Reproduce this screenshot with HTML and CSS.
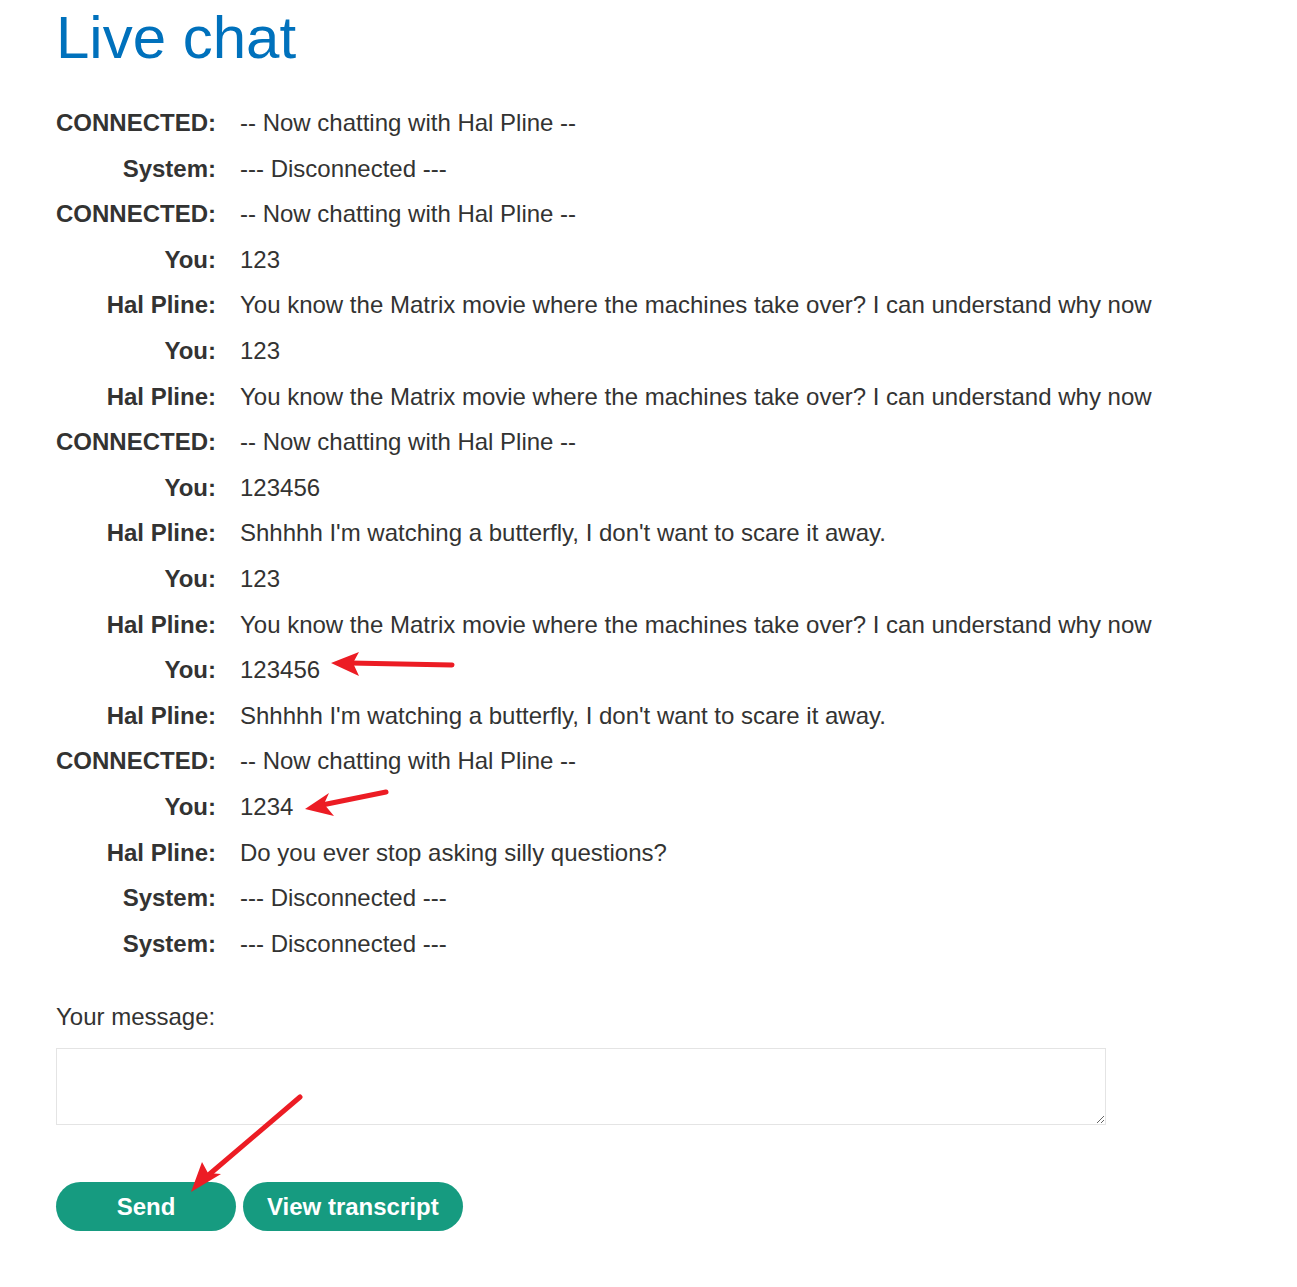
FILE: index.html
```html
<!DOCTYPE html>
<html>
<head>
<meta charset="utf-8">
<link rel="stylesheet" href="styles.css">
</head>
<body>
<div class="page">
  <h1 class="title">Live chat</h1>
  <div class="chat">
    <div class="who">CONNECTED:</div><div class="msg">-- Now chatting with Hal Pline --</div>
    <div class="who">System:</div><div class="msg">--- Disconnected ---</div>
    <div class="who">CONNECTED:</div><div class="msg">-- Now chatting with Hal Pline --</div>
    <div class="who">You:</div><div class="msg">123</div>
    <div class="who">Hal Pline:</div><div class="msg">You know the Matrix movie where the machines take over? I can understand why now</div>
    <div class="who">You:</div><div class="msg">123</div>
    <div class="who">Hal Pline:</div><div class="msg">You know the Matrix movie where the machines take over? I can understand why now</div>
    <div class="who">CONNECTED:</div><div class="msg">-- Now chatting with Hal Pline --</div>
    <div class="who">You:</div><div class="msg">123456</div>
    <div class="who">Hal Pline:</div><div class="msg">Shhhhh I'm watching a butterfly, I don't want to scare it away.</div>
    <div class="who">You:</div><div class="msg">123</div>
    <div class="who">Hal Pline:</div><div class="msg">You know the Matrix movie where the machines take over? I can understand why now</div>
    <div class="who">You:</div><div class="msg">123456</div>
    <div class="who">Hal Pline:</div><div class="msg">Shhhhh I'm watching a butterfly, I don't want to scare it away.</div>
    <div class="who">CONNECTED:</div><div class="msg">-- Now chatting with Hal Pline --</div>
    <div class="who">You:</div><div class="msg">1234</div>
    <div class="who">Hal Pline:</div><div class="msg">Do you ever stop asking silly questions?</div>
    <div class="who">System:</div><div class="msg">--- Disconnected ---</div>
    <div class="who">System:</div><div class="msg">--- Disconnected ---</div>
  </div>
  <form class="form">
    <label class="label" for="m">Your message:</label>
    <textarea id="m" class="input"></textarea>
    <div class="buttons">
      <button type="button" class="btn btn-send">Send</button>
      <button type="button" class="btn">View transcript</button>
    </div>
  </form>
</div>
<svg class="marks" width="1297" height="1287" viewBox="0 0 1297 1287">
  <g stroke="#ec1c24" stroke-width="5" stroke-linecap="round" fill="none">
    <line x1="452" y1="665" x2="350" y2="663"/>
    <line x1="386" y1="792" x2="322" y2="805"/>
    <line x1="300" y1="1097" x2="205" y2="1178"/>
  </g>
  <g fill="#ec1c24">
    <polygon points="331,663 359,652 353,663 359,676"/>
    <polygon points="305,809 329,793 324,804 334,816"/>
    <polygon points="191,1192 202,1162 208,1173 221,1174"/>
  </g>
</svg>
</body>
</html>
```
FILE: styles.css
```css
html, body {
  margin: 0;
  padding: 0;
  background: #fff;
}
body {
  font-family: "Liberation Sans", Arial, sans-serif;
  color: #333332;
  position: relative;
}
.page {
  padding: 0 56px;
}
.title {
  margin: 0;
  padding-top: 2px;
  font-size: 60px;
  font-weight: 400;
  line-height: 72px;
  color: #0071bc;
}
.chat {
  margin-top: 26px;
  display: grid;
  grid-template-columns: max-content 1fr;
  column-gap: 24px;
  font-size: 24px;
  line-height: 45.6px;
}
.who {
  font-weight: 700;
  text-align: right;
}
.msg {
  font-weight: 400;
}
.form {
  margin-top: 28px;
  display: flex;
  flex-direction: column;
  align-items: flex-start;
}
.label {
  font-size: 24px;
  line-height: 46px;
}
.input {
  box-sizing: border-box;
  width: 1050px;
  height: 77px;
  margin-top: 8px;
  border: 1px solid #e4e4e4;
  font-family: inherit;
  font-size: 24px;
  resize: vertical;
}
.buttons {
  margin-top: 57px;
  display: flex;
  gap: 7px;
}
.btn {
  height: 49px;
  padding: 0 24px;
  border: none;
  border-radius: 25px;
  background: #169b80;
  color: #fff;
  font-family: "Liberation Sans", Arial, sans-serif;
  font-weight: 700;
  font-size: 24px;
}
.btn-send {
  width: 180px;
}
.marks {
  position: absolute;
  left: 0;
  top: 0;
  pointer-events: none;
}
```
